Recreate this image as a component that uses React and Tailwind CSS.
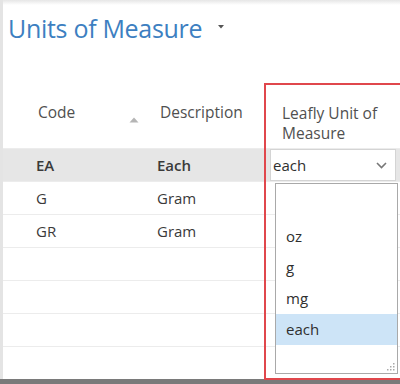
import React from 'react';

const rows = [
  { code: 'EA', desc: 'Each', selected: true },
  { code: 'G', desc: 'Gram' },
  { code: 'GR', desc: 'Gram' },
  { code: '', desc: '' },
  { code: '', desc: '' },
  { code: '', desc: '' },
  { code: '', desc: '' },
];

const options = ['oz', 'g', 'mg', 'each'];

const font = { fontFamily: '"Open Sans", "Noto Sans", sans-serif' };

const App = () => {
  return (
    <div className="w-[400px] h-[384px] bg-[#7a7a7a] overflow-hidden" style={font}>
      <div className="relative w-[400px] h-[379px] bg-white border-l-[3px] border-[#e4e4e4] flex flex-col">
        <div className="h-[5px] bg-gradient-to-b from-[#e6e6e6] to-white" />

        <div className="flex items-center h-[52px] pl-[5px] pb-[4px]">
          <span className="text-[25px] text-[#3d7fc1] tracking-[-0.3px]">Units of Measure</span>
          <svg width="8" height="6" viewBox="0 0 8 6" className="ml-[15px] mt-[-4px]">
            <path d="M1 1 L7 1 L4 4.5 Z" fill="#555" />
          </svg>
        </div>

        <div className="flex items-center h-[91px] pt-[20px] text-[15.5px] text-[#505050]">
          <div className="w-[90px] pl-[35px]">Code</div>
          <div className="w-[67px] pl-[36px] pt-[14px]">
            <svg width="10" height="6" viewBox="0 0 10 6">
              <path d="M0.5 5.5 L5 0.5 L9.5 5.5 Z" fill="#b5b5b5" />
            </svg>
          </div>
          <div className="w-[104px]">Description</div>
          <div className="flex-1 pl-[18px] mt-[20px] leading-[20px] text-[#505050]">
            Leafly Unit of<br />Measure
          </div>
        </div>

        <div className="flex flex-col flex-1">
          {rows.map((r, i) => (
            <div
              key={i}
              className={`flex items-center h-[33px] border-t border-[#ececec] text-[15px] text-[#3a3a3a] ${
                r.selected ? 'bg-[#e6e6e6] font-semibold' : ''
              }`}
            >
              <div className="w-[154px] pl-[33px]">{r.code}</div>
              <div className="w-[113px]">{r.desc}</div>
              <div className="flex-1 h-full pr-[4px]">
                {r.selected && (
                  <div className="h-full bg-white border border-[#d4d4d4] flex items-center justify-between pl-[2px] pr-[8px] font-normal text-[#2f2f2f]">
                    <span>each</span>
                    <svg width="11" height="7" viewBox="0 0 11 7">
                      <path d="M1 1 L5.5 5.5 L10 1" fill="none" stroke="#777" strokeWidth="1.6" />
                    </svg>
                  </div>
                )}
              </div>
            </div>
          ))}
        </div>

        <div className="absolute left-[272px] top-[183px] w-[123px] h-[191px] bg-white border border-[#a9a9a9] flex flex-col text-[15px] text-[#2f2f2f]">
          <div className="h-[37px]" />
          {options.map((o) => (
            <div
              key={o}
              className={`h-[31px] flex items-center pl-[10px] ${o === 'each' ? 'bg-[#cde4f7]' : ''}`}
            >
              {o}
            </div>
          ))}
          <div className="flex-1 flex items-end justify-end p-[2px]">
            <svg width="8" height="8" viewBox="0 0 8 8">
              <rect x="6" y="0" width="1.5" height="1.5" fill="#aaa" />
              <rect x="3" y="3" width="1.5" height="1.5" fill="#aaa" />
              <rect x="6" y="3" width="1.5" height="1.5" fill="#aaa" />
              <rect x="0" y="6" width="1.5" height="1.5" fill="#aaa" />
              <rect x="3" y="6" width="1.5" height="1.5" fill="#aaa" />
              <rect x="6" y="6" width="1.5" height="1.5" fill="#aaa" />
            </svg>
          </div>
        </div>

        <div className="absolute left-[261px] top-[83px] w-[138px] h-[297px] border-[2.5px] border-[#e0474c] pointer-events-none" />
      </div>
    </div>
  );
};

export default App;
